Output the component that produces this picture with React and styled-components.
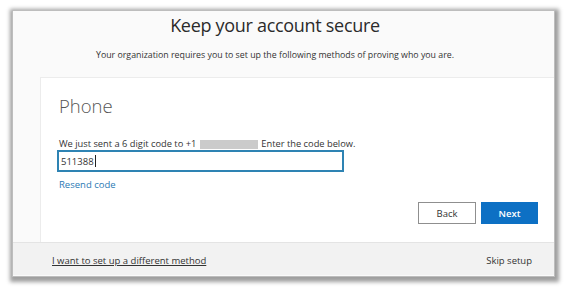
import React from 'react';
import styled, { createGlobalStyle } from 'styled-components';

const GlobalStyle = createGlobalStyle`
  html, body { margin: 0; padding: 0; background: #fff; }
  body { font-family: "Open Sans", "Noto Sans", sans-serif; color: #333; }
`;

const Page = styled.div`
  width: 567px;
  height: 289px;
  box-sizing: border-box;
  padding: 11px 0 0 13px;
`;

const Frame = styled.div`
  width: 541px;
  height: 265px;
  background: #fafafa;
  box-shadow: 0 0 0 1px #bdbdbd, 1px 2px 4px 4px rgba(0, 0, 0, 0.38);
  display: flex;
  flex-direction: column;
  overflow: hidden;
`;

const Header = styled.div`
  height: 66px;
  padding-right: 17px;
  text-align: center;
`;

const Title = styled.h1`
  margin: 1px 0 0;
  font-size: 18px;
  line-height: 26px;
  letter-spacing: -0.3px;
  font-weight: 400;
  color: #2b2b2b;
`;

const Subtitle = styled.p`
  margin: 11px 0 0;
  font-size: 8.8px;
  line-height: 13px;
  color: #333;
`;

const Body = styled.div`
  padding-left: 27px;
`;

const Card = styled.div`
  height: 165px;
  box-sizing: border-box;
  background: #fff;
  border-top: 1px solid #ececec;
  border-left: 1px solid #ececec;
  padding: 16px 16px 0 18px;
  display: flex;
  flex-direction: column;
  align-items: flex-start;
`;

const Heading = styled.h2`
  margin: 0;
  font-size: 18.5px;
  line-height: 24px;
  font-weight: 300;
  color: #555;
`;

const Instruction = styled.p`
  margin: 20px 0 0;
  font-size: 9.3px;
  line-height: 12px;
  color: #333;
  display: flex;
  align-items: center;
`;

const Redacted = styled.span`
  display: inline-block;
  width: 58px;
  height: 9px;
  margin: 0 3px 0 4px;
  background: #cbcbcb;
`;

const CodeInput = styled.div`
  margin: 0 0 0 -2px;
  width: 287px;
  height: 22px;
  box-sizing: border-box;
  border: 2px solid #2e83b3;
  padding: 0 2px;
  display: flex;
  align-items: center;
  font-size: 9.5px;
  color: #333;
`;

const Caret = styled.span`
  display: inline-block;
  width: 1px;
  height: 12px;
  margin-left: 1px;
  background: #222;
`;

const Link = styled.a`
  margin-top: 7px;
  font-size: 9.5px;
  line-height: 12px;
  color: #2b79b4;
  text-decoration: none;
`;

const Actions = styled.div`
  align-self: stretch;
  margin-top: 11px;
  display: flex;
  justify-content: flex-end;
  gap: 5px;
`;

const Button = styled.button`
  width: ${p => p.$w}px;
  height: 22px;
  box-sizing: border-box;
  font-family: inherit;
  font-size: 9.5px;
  font-weight: ${p => (p.$primary ? 600 : 400)};
  color: ${p => (p.$primary ? '#fff' : '#333')};
  background: ${p => (p.$primary ? '#0d70c4' : '#fff')};
  border: 1px solid ${p => (p.$primary ? '#0d70c4' : '#8f8f8f')};
  padding: 0;
`;

const Footer = styled.div`
  height: 33px;
  box-sizing: border-box;
  background: #f2f2f2;
  border-top: 1px solid #e4e4e4;
  padding: 12px 22px 0 39px;
  display: flex;
  justify-content: space-between;
  align-items: flex-start;
  font-size: 9.5px;
  line-height: 12px;
  color: #333;
`;

const FooterLink = styled.a`
  color: #333;
  text-decoration: underline;
`;

export default function App() {
  return (
    <>
      <GlobalStyle />
      <Page>
        <Frame>
          <Header>
            <Title>Keep your account secure</Title>
            <Subtitle>Your organization requires you to set up the following methods of proving who you are.</Subtitle>
          </Header>
          <Body>
            <Card>
              <Heading>Phone</Heading>
              <Instruction>
                We just sent a 6 digit code to +1<Redacted />Enter the code below.
              </Instruction>
              <CodeInput>
                511388<Caret />
              </CodeInput>
              <Link>Resend code</Link>
              <Actions>
                <Button $w={58}>Back</Button>
                <Button $w={57} $primary>Next</Button>
              </Actions>
            </Card>
          </Body>
          <Footer>
            <FooterLink>I want to set up a different method</FooterLink>
            <span>Skip setup</span>
          </Footer>
        </Frame>
      </Page>
    </>
  );
}
